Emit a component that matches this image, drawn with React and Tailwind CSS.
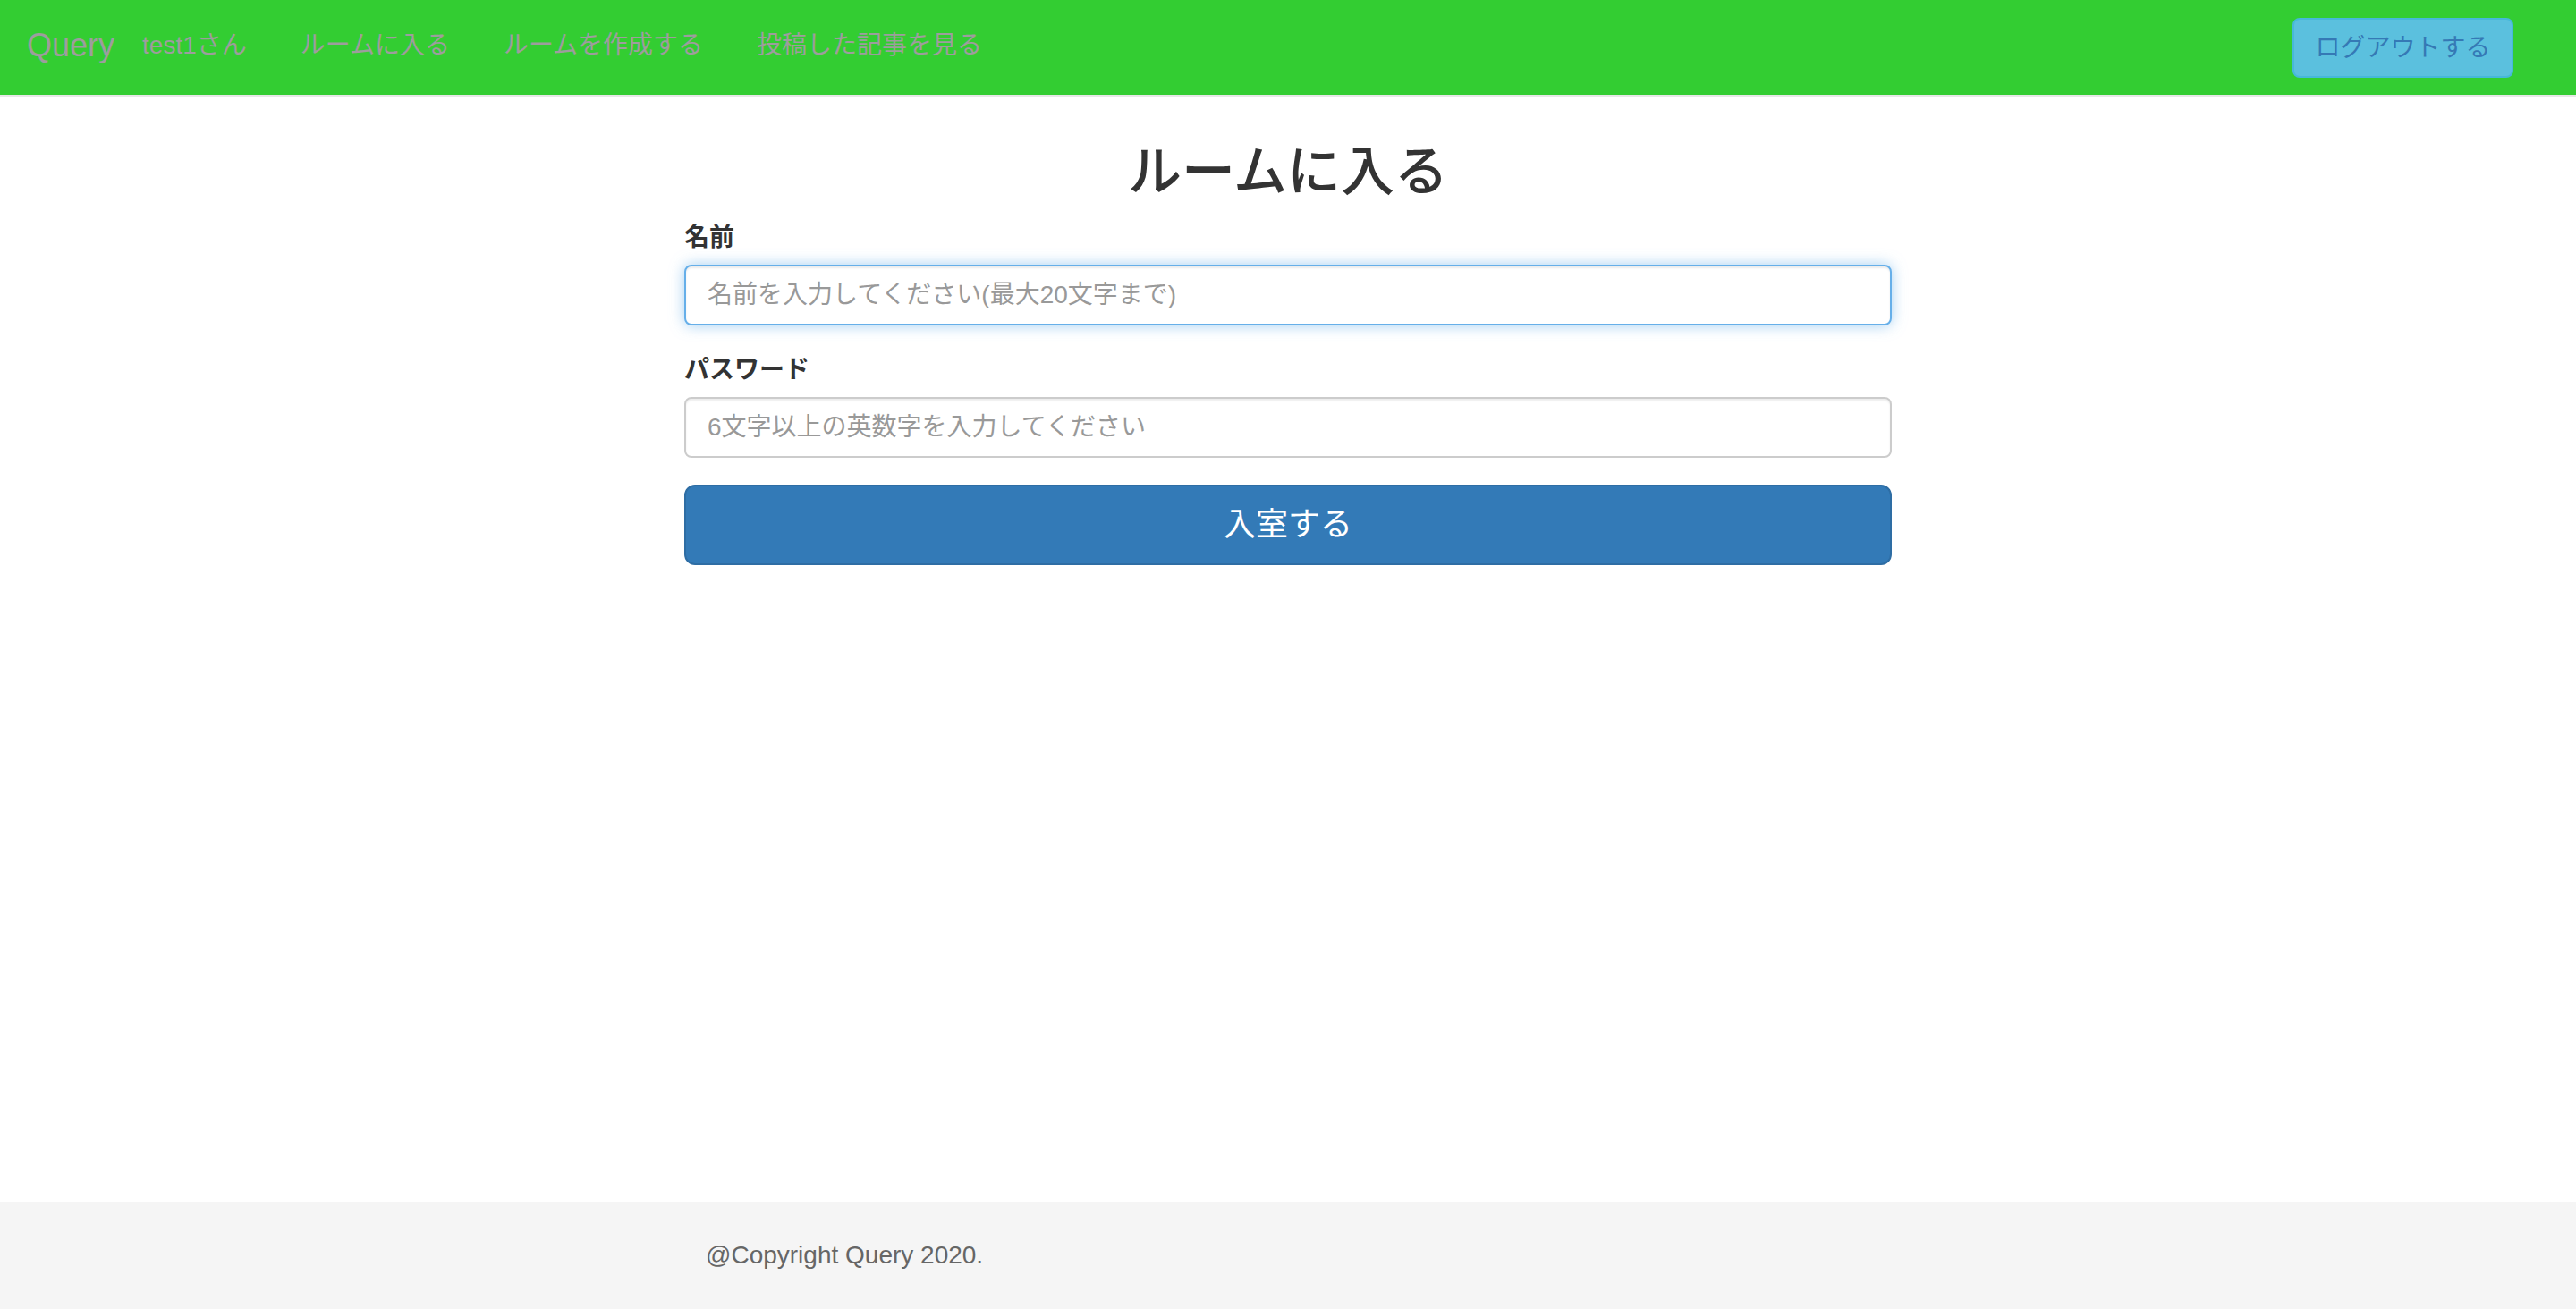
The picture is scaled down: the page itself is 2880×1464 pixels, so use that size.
import React from 'react';

const font = { fontFamily: '"Liberation Sans", "Noto Sans CJK JP", sans-serif' };

const navLinks = ['ルームに入る', 'ルームを作成する', '投稿した記事を見る'];

const Navbar = () => (
  <nav className="h-[108px] bg-[#33cd32] border-b-2 border-[#e7e7e7] flex items-start justify-between">
    <div className="h-[102px] flex items-center pl-[30px]">
      <a className="text-[36px] text-[#9d9d9d] leading-[40px]">Query</a>
      <span className="ml-[31px] text-[28px] text-[#9d9d9d] leading-[40px]">test1さん</span>
      <ul className="flex ml-[30px]">
        {navLinks.map((label) => (
          <li key={label} className="px-[30px] text-[28px] text-[#9d9d9d] leading-[40px]">
            {label}
          </li>
        ))}
      </ul>
    </div>
    <button className="mt-[20px] mr-[70px] w-[247px] h-[67px] bg-[#5bc0de] border-2 border-[#46b8da] rounded-[8px] text-[28px] text-[#3579b5]">
      ログアウトする
    </button>
  </nav>
);

const EnterRoomForm = () => (
  <div className="w-[1350px] mx-auto">
    <h2 className="mt-[52px] mb-[20px] text-center text-[60px] leading-[66px] font-medium text-[#333]">
      ルームに入る
    </h2>
    {/* 名前 */}
    <div className="mb-[30px]">
      <label className="block mb-[10px] text-[28px] leading-[40px] font-bold text-[#333]">名前</label>
      <input
        type="text"
        placeholder="名前を入力してください(最大20文字まで)"
        className="block w-full h-[68px] px-[24px] text-[28px] text-[#555] bg-white border-2 border-[#66afe9] rounded-[8px] outline-none shadow-[inset_0_2px_2px_rgba(0,0,0,0.075),0_0_16px_rgba(102,175,233,0.6)] placeholder:text-[#999]"
        style={font}
      />
    </div>
    {/* パスワード */}
    <div className="mb-[30px]">
      <label className="block mb-[10px] text-[28px] leading-[40px] font-bold text-[#333]">パスワード</label>
      <input
        type="password"
        placeholder="6文字以上の英数字を入力してください"
        className="block w-full h-[68px] px-[24px] text-[28px] text-[#555] bg-white border-2 border-[#ccc] rounded-[8px] outline-none shadow-[inset_0_2px_2px_rgba(0,0,0,0.075)] placeholder:text-[#999]"
        style={font}
      />
    </div>
    <button
      className="block w-full h-[90px] bg-[#337ab7] border-2 border-[#2e6da4] rounded-[12px] text-[36px] text-white"
      style={font}
    >
      入室する
    </button>
  </div>
);

const Footer = () => (
  <footer className="h-[120px] bg-[#f5f5f5] flex items-center">
    <div className="w-[1350px] mx-auto pl-[24px] text-[28px] text-[#666]">@Copyright Query 2020.</div>
  </footer>
);

export default function App() {
  return (
    <div className="min-h-screen flex flex-col bg-white" style={font}>
      <Navbar />
      <main className="flex-1">
        <EnterRoomForm />
      </main>
      <Footer />
    </div>
  );
}
